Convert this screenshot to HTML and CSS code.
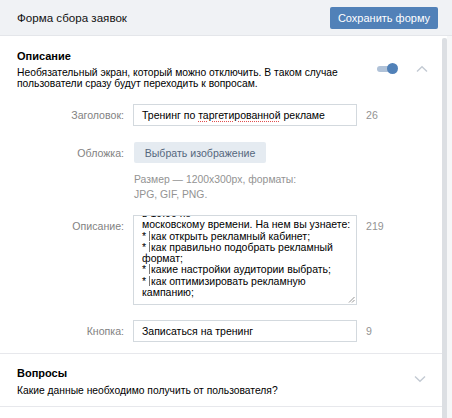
FILE: index.html
```html
<!DOCTYPE html>
<html lang="ru">
<head>
<meta charset="utf-8">
<title>Форма сбора заявок</title>
<link rel="stylesheet" href="styles.css">
</head>
<body>
<header class="topbar">
  <div class="topbar-title">Форма сбора заявок</div>
  <button class="btn-primary">Сохранить форму</button>
</header>
<div class="main">
  <div class="panel">
    <section class="block">
      <div class="block-head">
        <div class="block-text">
          <div class="block-title">Описание</div>
          <div class="block-desc">Необязательный экран, который можно отключить. В таком случае<br>пользователи сразу будут переходить к вопросам.</div>
        </div>
        <div class="block-controls">
          <span class="toggle"><span class="toggle-knob"></span></span>
          <svg class="chev" width="12" height="8" viewBox="0 0 12 8"><path d="M1 6.5 L6 1.8 L11 6.5" fill="none" stroke="#c3cad3" stroke-width="1.4"/></svg>
        </div>
      </div>
      <div class="form">
        <div class="row">
          <div class="label">Заголовок:</div>
          <div class="input">Тренинг по <span class="spell">таргетированной</span> рекламе</div>
          <div class="count">26</div>
        </div>
        <div class="row row-cover">
          <div class="label">Обложка:</div>
          <div class="cover">
            <button class="btn-secondary">Выбрать изображение</button>
            <div class="hint">Размер — 1200x300px, форматы:<br>JPG, GIF, PNG.</div>
          </div>
        </div>
        <div class="row row-area">
          <div class="label">Описание:</div>
          <div class="textarea">
            <div class="textarea-scroll">
              <div class="ta-line">в 19:00 по</div>
              <div class="ta-line">московскому времени. На нем вы узнаете:</div>
              <div class="ta-line">* <span class="caret"></span>как открыть рекламный кабинет;</div>
              <div class="ta-line">* <span class="caret"></span>как правильно подобрать рекламный</div>
              <div class="ta-line">формат;</div>
              <div class="ta-line">* <span class="caret"></span>какие настройки аудитории выбрать;</div>
              <div class="ta-line">* <span class="caret"></span>как оптимизировать рекламную</div>
              <div class="ta-line">кампанию;</div>
            </div>
            <svg class="grip" width="7" height="7" viewBox="0 0 7 7"><path d="M6.5 1 L1 6.5 M6.5 4 L4 6.5" stroke="#888" stroke-width="0.9"/></svg>
          </div>
          <div class="count">219</div>
        </div>
        <div class="row row-button">
          <div class="label">Кнопка:</div>
          <div class="input">Записаться на тренинг</div>
          <div class="count">9</div>
        </div>
      </div>
    </section>
    <section class="block block-collapsed">
      <div class="block-head">
        <div class="block-text">
          <div class="block-title">Вопросы</div>
          <div class="block-desc">Какие данные необходимо получить от пользователя?</div>
        </div>
        <div class="block-controls">
          <svg class="chev" width="12" height="8" viewBox="0 0 12 8"><path d="M1 1.5 L6 6.2 L11 1.5" fill="none" stroke="#c3cad3" stroke-width="1.4"/></svg>
        </div>
      </div>
    </section>
  </div>
  <div class="scrollbar"></div>
  <div class="scroll-edge"></div>
</div>
</body>
</html>
```

FILE: styles.css
```css
* { box-sizing: border-box; }
html, body { margin: 0; padding: 0; }
body {
  width: 452px;
  height: 418px;
  overflow: hidden;
  background: #ffffff;
  font-family: "Liberation Sans", Arial, sans-serif;
  font-size: 11px;
  color: #000;
}
.topbar {
  height: 36px;
  display: flex;
  align-items: center;
  justify-content: space-between;
  padding: 0 14px 0 17px;
  background: #f0f2f5;
  border-bottom: 1px solid #e4e6ea;
}
.topbar-title { font-size: 11.6px; color: #111; }
.btn-primary {
  height: 22px;
  width: 108px;
  border: 0;
  border-radius: 2px;
  background: #5181b8;
  color: #fff;
  font-family: inherit;
  font-size: 11px;
  padding: 0;
}
.main { display: flex; height: 382px; }
.panel { width: 442px; background: #fff; }
.scrollbar { width: 5px; background: #dcdfe3; margin-top: 2px; border-radius: 2px 2px 0 0; }
.scroll-edge { flex: 1; background: #f6f7f8; }
.block { border-bottom: 1px solid #e7e8ec; padding: 13px 14px 11px 17px; }
.block-head { display: flex; justify-content: space-between; }
.block-title { font-weight: bold; font-size: 11px; line-height: 14px; }
.block-desc { margin-top: 4px; line-height: 11px; font-size: 10.3px; }
.block-controls { display: flex; align-items: center; gap: 19px; padding-top: 14px; height: 26px; }
.toggle { position: relative; width: 20px; height: 6px; border-radius: 3px; background: #b0c2d8; }
.toggle-knob { position: absolute; right: -1px; top: -3px; width: 11px; height: 11px; border-radius: 50%; background: #5181b8; }
.chev { display: block; }
.form { margin-top: 15px; display: flex; flex-direction: column; }
.row { display: grid; grid-template-columns: 124px 224px auto; column-gap: 9px; align-items: start; margin-left: -17px; }
.row-cover { margin-top: 16px; }
.row-area { margin-top: 13px; }
.row-button { margin-top: 15px; }
.label { text-align: right; color: #828282; font-size: 10.6px; line-height: 22px; }
.count { color: #939393; line-height: 22px; font-size: 10.6px; }
.input {
  height: 22px;
  border: 1px solid #d3d9de;
  padding: 0 8px;
  line-height: 20px;
  font-size: 10.5px;
  color: #000;
}
.spell { text-decoration: underline dotted #e05050; text-underline-offset: 2px; }
.cover { display: flex; flex-direction: column; align-items: flex-start; }
.btn-secondary {
  height: 21px;
  width: 132px;
  margin-left: 1px;
  border: 0;
  border-radius: 2px;
  background: #e5ebf1;
  color: #55677d;
  font-family: inherit;
  font-size: 10.6px;
  padding: 0;
}
.hint { margin-top: 9px; margin-left: 1px; color: #939393; font-size: 10.4px; line-height: 15px; }
.textarea {
  position: relative;
  height: 90px;
  border: 1px solid #d3d9de;
  overflow: hidden;
  padding: 0 8px;
  font-size: 10.5px;
  line-height: 11.3px;
}
.ta-line { white-space: nowrap; }
.textarea-scroll { margin-top: -8px; }
.caret { display: inline-block; width: 1px; height: 10px; background: #777; vertical-align: -1px; margin-right: 1px; }
.grip { position: absolute; right: 1px; bottom: 1px; }
.block-collapsed { padding-top: 12px; padding-bottom: 10px; }
.block-collapsed .block-desc { margin-top: 5px; }
.block-collapsed .block-controls { padding-top: 0; padding-right: 2px; }
```
